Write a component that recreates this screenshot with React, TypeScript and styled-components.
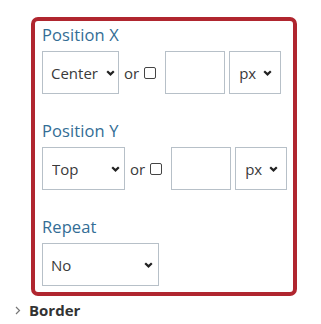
import React from "react";
import styled, { createGlobalStyle } from "styled-components";

const Global = createGlobalStyle`
  html, body { margin: 0; padding: 0; background: #fff; }
  body { font-family: "Open Sans", "Noto Sans", sans-serif; }
`;

const Page = styled.div`
  padding-top: 17px;
`;

const Panel = styled.div`
  box-sizing: border-box;
  width: 266px;
  margin-left: 31px;
  border: 4px solid #b0262f;
  border-radius: 7px;
  padding: 3px 7px 6px 7px;
  display: flex;
  flex-direction: column;
  gap: 26px;
`;

const Field = styled.div`
  display: flex;
  flex-direction: column;
  gap: 5px;
`;

const Label = styled.div`
  font-size: 16.5px;
  line-height: 22px;
  color: #336d95;
  letter-spacing: 0.1px;
`;

const Row = styled.div`
  display: flex;
  align-items: center;
  height: 43px;
`;

const SelectWrap = styled.div<{ $w: number; $mr?: number }>`
  position: relative;
  width: ${(p) => p.$w}px;
  height: 43px;
  margin-right: ${(p) => p.$mr ?? 0}px;
  flex: none;
`;

const Select = styled.select<{ $pl: number }>`
  appearance: none;
  -webkit-appearance: none;
  box-sizing: border-box;
  width: 100%;
  height: 100%;
  border: 1px solid #b7c0c8;
  border-radius: 0;
  background: #fff;
  padding: 0 0 0 ${(p) => p.$pl}px;
  font-family: "Open Sans", "Noto Sans", sans-serif;
  font-size: 15px;
  color: #3a3a3a;
  outline: none;
`;

const Chevron = styled.svg<{ $r: number }>`
  position: absolute;
  right: ${(p) => p.$r}px;
  top: 50%;
  margin-top: -3px;
  width: 9px;
  height: 6px;
  pointer-events: none;
`;

const Or = styled.span`
  font-size: 15px;
  color: #3a3a3a;
  margin: 0 5px 0 0;
`;

const Check = styled.span`
  box-sizing: border-box;
  width: 12px;
  height: 12px;
  border: 1px solid #444;
  border-radius: 2px;
  margin-right: 9px;
  flex: none;
`;

const Input = styled.input`
  box-sizing: border-box;
  width: 60px;
  height: 43px;
  border: 1px solid #b7c0c8;
  border-radius: 0;
  margin-right: 4px;
  padding: 0 6px;
  font-size: 15px;
  flex: none;
  outline: none;
`;

const Section = styled.div`
  display: flex;
  align-items: center;
  gap: 8px;
  padding: 4px 0 0 15px;
  font-size: 15px;
  line-height: 20px;
  font-weight: 700;
  color: #333;
`;

const Arrow = styled.svg`
  width: 6px;
  height: 9px;
`;

function Dropdown({
  w,
  value,
  options,
  pl,
  r,
  mr,
}: {
  w: number;
  value: string;
  options: string[];
  pl: number;
  r: number;
  mr?: number;
}) {
  return (
    <SelectWrap $w={w} $mr={mr}>
      <Select $pl={pl} defaultValue={value}>
        {options.map((o) => (
          <option key={o}>{o}</option>
        ))}
      </Select>
      <Chevron $r={r} viewBox="0 0 9 6">
        <path d="M1.2 1.2 L4.5 4.4 L7.8 1.2" fill="none" stroke="#222" strokeWidth="2.2" />
      </Chevron>
    </SelectWrap>
  );
}

export default function App() {
  return (
    <>
      <Global />
      <Page>
        <Panel>
          <Field>
            <Label>Position X</Label>
            <Row>
              <Dropdown w={77} value="Center" options={["Left", "Center", "Right"]} pl={8} r={4} mr={5} />
              <Or>or</Or>
              <Check />
              <Input />
              <Dropdown w={52} value="px" options={["px", "%", "em"]} pl={9} r={9} />
            </Row>
          </Field>
          <Field>
            <Label>Position Y</Label>
            <Row>
              <Dropdown w={83} value="Top" options={["Top", "Center", "Bottom"]} pl={9} r={5} mr={5} />
              <Or>or</Or>
              <Check />
              <Input />
              <Dropdown w={52} value="px" options={["px", "%", "em"]} pl={9} r={9} />
            </Row>
          </Field>
          <Field>
            <Label>Repeat</Label>
            <Row>
              <Dropdown w={117} value="No" options={["No", "Repeat", "Repeat X", "Repeat Y"]} pl={8} r={6} />
            </Row>
          </Field>
        </Panel>
        <Section>
          <Arrow viewBox="0 0 6 9">
            <path d="M1 1 L4.5 4.5 L1 8" fill="none" stroke="#777" strokeWidth="1.2" />
          </Arrow>
          Border
        </Section>
      </Page>
    </>
  );
}
